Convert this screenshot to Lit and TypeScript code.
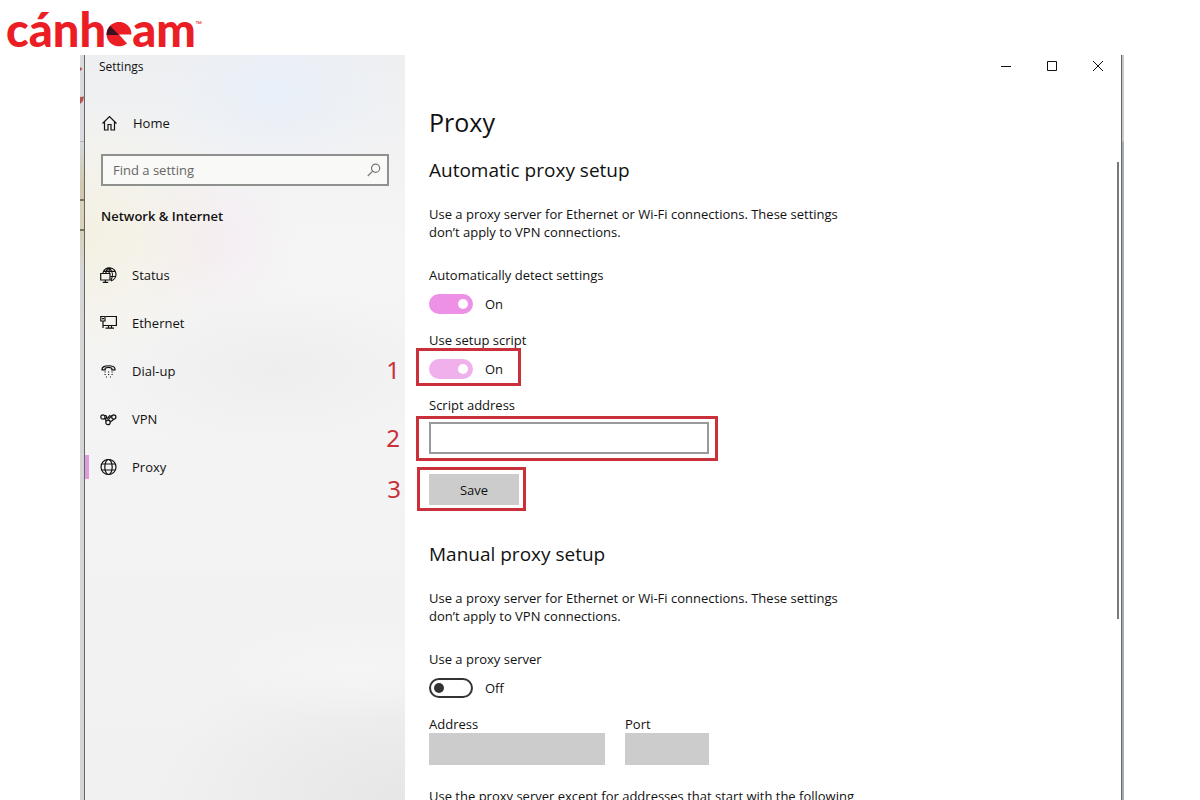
import { LitElement, html, css, svg, nothing } from "lit";
import { customElement, property, state } from "lit/decorators.js";
import { classMap } from "lit/directives/class-map.js";

const icons = {
  home: svg`<path d="M1.5 8.5 8.5 1.5 15.5 8.5M3.5 7V15H7V9.5H10V15H13.5V7" />`,
  status: svg`<path d="M3 5.8A6.6 6.6 0 1 1 11 13.8M9 .8C7 2.2 6 3.8 5.8 6M9 .8C13.4 4.5 13 9.8 10.8 13.6M4 4.3H14.8M10.5 9.5H15.6M9.2 .8V6" />
    <path d="M.7 6.5H10V13H.7ZM5.4 13V15.4M2.8 15.4H8.2" />`,
  ethernet: svg`<path d="M5.5 1.5H16.4V10.5H3M8.5 10.5V13.2M11.5 10.5V13.2M5.5 13.2H14M3 6V13" />
    <path d="M.8 1.5H5V6H.8ZM2 3.6H4" />`,
  dialup: svg`<path d="M2 6.2C2 1.6 15 1.6 15 6.2V6.8H11.8V5.2C10 4.4 7 4.4 5.2 5.2V6.8H2Z" />
    <path d="M4.5 9h1.2M8 9h1.2M11.5 9h1.2M4.5 11.5h1.2M8 11.5h1.2M11.5 11.5h1.2M6 14h1M10 14h1" />`,
  vpn: svg`<circle cx="2.9" cy="6" r="2.1" /><circle cx="13.8" cy="6" r="2.1" /><circle cx="8" cy="11.4" r="2.2" />
    <path d="M4.8 4.6C6.8 4 7.4 7 5.2 7.6M4.8 7.4 6.2 9.9M6.8 8 10.2 4.2M8.4 8.6 11.8 4.4M10.2 11 14 8.2" />`,
  globe: svg`<circle cx="8.5" cy="8" r="7.5" /><ellipse cx="8.5" cy="8" rx="3.7" ry="7.5" /><path d="M1.8 5H15.2M1.8 11H15.2" />`,
};

const icon = (name: keyof typeof icons) =>
  html`<svg class="icon" viewBox="0 0 17 17" width="17" height="17" aria-hidden="true">${icons[name]}</svg>`;

const iconStyles = css`
  .icon {
    flex: none;
    fill: none;
    stroke: #111;
    stroke-width: 1.2;
  }
`;

const stepStyles = css`
  .frame {
    position: absolute;
    border: 3px solid #c9303a;
    pointer-events: none;
  }
  .step {
    position: absolute;
    right: calc(100% + 18px);
    top: 0;
    width: 16px;
    color: #c9303a;
    font: 24px/38px "Noto Sans", "Open Sans", sans-serif;
    text-align: center;
  }
`;

@customElement("brand-logo")
class BrandLogo extends LitElement {
  static styles = css`
    :host {
      display: block;
      padding-left: 6px;
      height: 55px;
      color: #eb1d25;
      font: 900 47px/59px Lato, "Liberation Sans", sans-serif;
    }
    .word {
      display: flex;
      align-items: baseline;
    }
    .pie {
      flex: none;
    }
    .tm {
      align-self: flex-start;
      margin-top: 20px;
      font: 700 8px/8px "Open Sans", sans-serif;
    }
  `;
  render() {
    return html`<div class="word" aria-label="cánheam">
      <span>cánh</span>
      <svg class="pie" width="26" height="25" viewBox="0 0 26 25" aria-hidden="true">
        <path fill="#eb1d25" d="M13 12.5H25.5A12.5 12.2 0 1 0 21 21.5Z" />
        <path fill="#3b1220" d="M13 13H.5A12.5 12.5 0 0 1 4.2 4Z" />
      </svg>
      <span>am</span><span class="tm">™</span>
    </div>`;
  }
}

@customElement("settings-sidebar")
class SettingsSidebar extends LitElement {
  static styles = [
    iconStyles,
    css`
      :host {
        display: block;
        background:
          radial-gradient(ellipse 130px 80px at 60% 5%, #e9f0f9, #e9f0f900),
          radial-gradient(ellipse 150px 130px at 0% 24%, #f4f1e2, #f4f1e200),
          radial-gradient(ellipse 90px 80px at 38% 25%, #f5ecf2, #f5ecf200),
          radial-gradient(ellipse 150px 50px at 85% 82%, #f5f5f5, #f5f5f500),
          radial-gradient(ellipse 260px 150px at 100% 100%, #e6e6e6, #e6e6e600),
          radial-gradient(ellipse 180px 80px at 60% 42%, #eeeeee, #eeeeee00),
          linear-gradient(#eeeff1, #f5f5f5 25%, #f3f3f3 60%, #f1f1f1);
      }
      .title {
        padding-left: 14px;
        font-size: 12px;
        line-height: 24px;
      }
      a {
        display: flex;
        align-items: center;
        box-sizing: border-box;
        height: 48px;
        gap: 15px;
        padding-left: 16px;
        color: inherit;
        text-decoration: none;
      }
      .home {
        margin-top: 20px;
      }
      .search {
        display: flex;
        align-items: center;
        box-sizing: border-box;
        height: 32px;
        margin: 7px 16px 0;
        padding: 0 6px 0 10px;
        border: 2px solid #8f918f;
        background: #f9f9f7;
      }
      input {
        flex: 1;
        min-width: 0;
        padding: 0;
        border: 0;
        outline: 0;
        background: none;
        font: inherit;
      }
      input::placeholder {
        color: #666;
      }
      .lens {
        fill: none;
        stroke: #777;
        stroke-width: 1.2;
      }
      h2 {
        margin: 20px 16px 25px;
        font-size: 13px;
        font-weight: 600;
        line-height: 20px;
      }
      ul {
        margin: 0;
        padding: 0;
        list-style: none;
      }
      li a {
        padding-left: 15px;
      }
      .current {
        background: linear-gradient(#df9bdc, #df9bdc) left center / 4px 24px no-repeat;
      }
    `,
  ];
  items: [keyof typeof icons, string][] = [
    ["status", "Status"],
    ["ethernet", "Ethernet"],
    ["dialup", "Dial-up"],
    ["vpn", "VPN"],
    ["globe", "Proxy"],
  ];
  render() {
    return html`
      <div class="title">Settings</div>
      <a class="home" href="#home">${icon("home")}Home</a>
      <div class="search">
        <input type="text" aria-label="Find a setting" placeholder="Find a setting" />
        <svg class="lens" width="14" height="14" viewBox="0 0 14 14" aria-hidden="true">
          <circle cx="8.6" cy="5.2" r="4.1" />
          <path d="M5.6 8.2 .8 13" />
        </svg>
      </div>
      <h2>Network &amp; Internet</h2>
      <ul>
        ${this.items.map(
          ([name, label]) => html`<li class=${classMap({ current: label === "Proxy" })}>
            <a href="#${name}" aria-current=${label === "Proxy" ? "page" : nothing}>${icon(name)}${label}</a>
          </li>`
        )}
      </ul>
    `;
  }
}

@customElement("toggle-setting")
class ToggleSetting extends LitElement {
  @property() label = "";
  @property() step = "";
  @property({ type: Boolean }) on = false;
  @property({ type: Boolean }) soft = false;
  static styles = [
    stepStyles,
    css`
      :host {
        display: block;
      }
      label {
        display: block;
      }
      .row {
        position: relative;
        display: flex;
        align-items: center;
        width: max-content;
        height: 20px;
        margin-top: 10px;
        gap: 12px;
      }
      input {
        appearance: none;
        display: flex;
        align-items: center;
        box-sizing: border-box;
        width: 44px;
        height: 20px;
        margin: 0;
        padding: 0 3px;
        border: 2px solid #333;
        border-radius: 10px;
      }
      input::before {
        content: "";
        width: 10px;
        height: 10px;
        border-radius: 50%;
        background: #333;
      }
      input:checked {
        justify-content: flex-end;
        border-color: #ed90e6;
        background: #ed90e6;
      }
      .soft:checked {
        border-color: #f0b0ec;
        background: #f0b0ec;
      }
      input:checked::before {
        background: #fff;
      }
      .frame {
        inset: -11px -18px -7px -13px;
      }
    `,
  ];
  render() {
    return html`
      <label for="switch">${this.label}</label>
      <div class="row">
        <input
          id="switch"
          type="checkbox"
          role="switch"
          class=${classMap({ soft: this.soft })}
          .checked=${this.on}
          @change=${(e: Event) => (this.on = (e.target as HTMLInputElement).checked)}
        />
        <span>${this.on ? "On" : "Off"}</span>
        ${this.step ? html`<span class="frame"><span class="step">${this.step}</span></span>` : nothing}
      </div>
    `;
  }
}

@customElement("proxy-page")
class ProxyPage extends LitElement {
  @state() script = "";
  static styles = [
    stepStyles,
    css`
      :host {
        display: block;
        box-sizing: border-box;
        max-width: 486px;
        padding: 24px 24px 0;
      }
      h1 {
        margin: 0 0 15px;
        font-size: 25px;
        font-weight: 400;
        line-height: 38px;
      }
      h2 {
        margin: 0;
        font-size: 19px;
        font-weight: 400;
        line-height: 28px;
      }
      p {
        margin: 21px 0 25px;
      }
      toggle-setting {
        margin-bottom: 17px;
      }
      label {
        display: block;
      }
      .marked {
        position: relative;
        width: max-content;
        max-width: 100%;
      }
      .address {
        margin: 8px 0 20px;
      }
      .save {
        margin-bottom: 35px;
      }
      input {
        display: block;
        box-sizing: border-box;
        height: 32px;
        margin: 0;
        padding: 0 8px;
        border: 0;
        border-radius: 0;
        background: #ccc;
        font: inherit;
      }
      .address input {
        width: 280px;
        border: 2px solid #999;
        background: #fff;
      }
      button {
        display: block;
        width: 90px;
        height: 31px;
        padding: 0;
        border: 0;
        background: #ccc;
        color: inherit;
        font: inherit;
      }
      .frame {
        inset: -6px -9px -7px -13px;
      }
      .save .frame {
        inset: -7px -7px -6px -12px;
      }
      .server {
        display: flex;
        gap: 20px;
        margin-bottom: 22px;
      }
      #server {
        width: 176px;
      }
      #port {
        width: 84px;
      }
      .exceptions {
        margin: 0;
      }
    `,
  ];
  render() {
    const note = html`<p>Use a proxy server for Ethernet or Wi-Fi connections. These settings don’t apply to VPN connections.</p>`;
    return html`
      <h1>Proxy</h1>
      <h2>Automatic proxy setup</h2>
      ${note}
      <toggle-setting label="Automatically detect settings" on></toggle-setting>
      <toggle-setting label="Use setup script" step="1" on soft></toggle-setting>
      <label for="script">Script address</label>
      <div class="marked address">
        <input id="script" type="text" .value=${this.script} />
        <span class="frame"><span class="step">2</span></span>
      </div>
      <div class="marked save">
        <button type="button">Save</button>
        <span class="frame"><span class="step">3</span></span>
      </div>
      <h2>Manual proxy setup</h2>
      ${note}
      <toggle-setting label="Use a proxy server"></toggle-setting>
      <div class="server">
        <div><label for="server">Address</label><input id="server" type="text" disabled /></div>
        <div><label for="port">Port</label><input id="port" type="text" disabled /></div>
      </div>
      <p class="exceptions">Use the proxy server except for addresses that start with the following</p>
    `;
  }
}

@customElement("app-root")
class AppRoot extends LitElement {
  static styles = css`
    :host {
      display: grid;
      grid-template-rows: auto minmax(0, 1fr);
      height: 100vh;
      overflow: hidden;
      background: #fff;
      color: #111;
      font: 13px/18px "Open Sans", "Noto Sans", sans-serif;
    }
    .window {
      display: grid;
      grid-template-columns: 5px 320px minmax(0, 1fr) 3px;
      margin: 0 76px 0 80px;
      overflow: hidden;
    }
    .behind {
      border-right: 1px solid #666;
      background: linear-gradient(
        #d9dbdf 0 86px,
        #b3b5b8 86px 87px,
        #d5d8dc 87px,
        #cfc8ac 130px 144px,
        #77725f 144px 146px,
        #d7d2b8 146px 174px,
        #77725f 174px 176px,
        #d6d1b8 176px,
        #d5d5d5 215px
      );
    }
    .behind svg {
      display: block;
    }
    .edge {
      border-left: 1px solid #666;
      background: linear-gradient(#c8c8c8 0 86px, #a3abbb 87px);
    }
    .main {
      display: grid;
      grid-template: 24px minmax(0, 1fr) / minmax(0, 1fr) 2px;
      padding-right: 2px;
    }
    .controls {
      grid-column: 1 / -1;
      display: flex;
      justify-content: flex-end;
      margin-right: -2px;
    }
    .controls button {
      display: grid;
      place-items: center;
      width: 46px;
      height: 22px;
      padding: 0;
      border: 0;
      background: none;
    }
    .controls svg {
      fill: none;
      stroke: #111;
    }
    .thumb {
      height: 63%;
      margin-top: 83px;
      background: #7a7a7a;
    }
  `;
  render() {
    const control = (label: string, d: string) => html`<button type="button" aria-label=${label}>
      <svg width="12" height="12" viewBox="0 0 12 12"><path d=${d} /></svg>
    </button>`;
    return html`
      <brand-logo></brand-logo>
      <div class="window">
        <div class="behind">
          <svg width="4" height="52" aria-hidden="true">
            <path fill="#b5524f" d="M0 12 2.5 14 0 16ZM0 42 4 41.5 3 46 0 49Z" />
          </svg>
        </div>
        <settings-sidebar></settings-sidebar>
        <div class="main">
          <div class="controls">
            ${control("Minimize", "M1 6.5H11")} ${control("Maximize", "M1.5 1.5H10.5V10.5H1.5Z")}
            ${control("Close", "M1 1 11 11M11 1 1 11")}
          </div>
          <proxy-page></proxy-page>
          <div class="thumb"></div>
        </div>
        <div class="edge"></div>
      </div>
    `;
  }
}
